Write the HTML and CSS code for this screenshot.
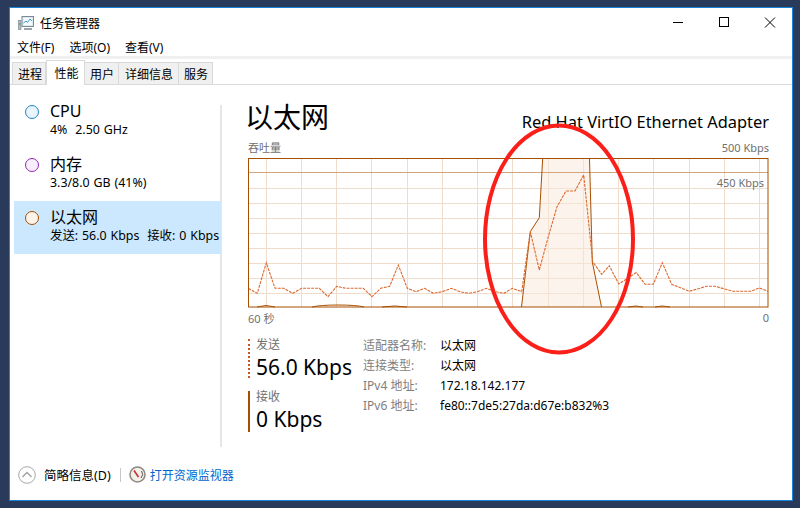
FILE: index.html
```html
<!DOCTYPE html>
<html lang="zh-CN">
<head>
    <meta charset="UTF-8">
    <title>任务管理器</title>
    <link rel="stylesheet" href="styles.css">
</head>
<body>
    <div class="window">
        <div class="titlebar">
            <svg class="app-icon" width="16" height="16" viewBox="0 0 16 16">
                <rect x="4" y="1.5" width="11.5" height="10" fill="#dfe9f2" stroke="#7d8a96"/>
                <rect x="5.5" y="3" width="8.5" height="7" fill="#f4fafe"/>
                <path d="M5.5 8 L8 6 L9.5 7.5 L12 4 L14 6" fill="none" stroke="#3f9cc9" stroke-width="1"/>
                <rect x="0.5" y="5.5" width="2.5" height="9" fill="#b5bcc2" stroke="#7d8a96" stroke-width="0.7"/>
                <rect x="1" y="8" width="1.5" height="2" fill="#5cb85c"/>
                <path d="M6 15 H14 V13 H6 Z" fill="#9aa3ab"/>
            </svg>
            <span class="title">任务管理器</span>
            <div class="controls">
                <svg width="12" height="12" viewBox="0 0 12 12"><path d="M1 5.5 H11" stroke="#000" fill="none"/></svg>
                <svg width="12" height="12" viewBox="0 0 12 12"><rect x="1.5" y="0.5" width="9" height="9" stroke="#000" fill="none"/></svg>
                <svg width="12" height="12" viewBox="0 0 12 12"><path d="M1 0.5 L11 10.5 M11 0.5 L1 10.5" stroke="#000" fill="none"/></svg>
            </div>
        </div>

        <div class="menu">
            <span>文件(F)</span>
            <span>选项(O)</span>
            <span>查看(V)</span>
        </div>

        <div class="tabs">
            <div class="tab">进程</div>
            <div class="tab active">性能</div>
            <div class="tab">用户</div>
            <div class="tab tab-wide">详细信息</div>
            <div class="tab">服务</div>
        </div>

        <div class="main">
            <div class="sidebar">
                <div class="side-item">
                    <span class="dot dot-cpu"></span>
                    <div>
                        <div class="side-title">CPU</div>
                        <div class="side-sub">4%&nbsp; 2.50 GHz</div>
                    </div>
                </div>
                <div class="side-item">
                    <span class="dot dot-mem"></span>
                    <div>
                        <div class="side-title">内存</div>
                        <div class="side-sub">3.3/8.0 GB (41%)</div>
                    </div>
                </div>
                <div class="side-item selected">
                    <span class="dot dot-net"></span>
                    <div>
                        <div class="side-title">以太网</div>
                        <div class="side-sub">发送: 56.0 Kbps&nbsp; 接收: 0 Kbps</div>
                    </div>
                </div>
            </div>

            <div class="content">
                <div class="head">
                    <div class="head-name">以太网</div>
                    <div class="head-adapter">Red Hat VirtIO Ethernet Adapter</div>
                </div>
                <div class="graph-label">
                    <span>吞吐量</span>
                    <span>500 Kbps</span>
                </div>
                <div class="graph">
                    <svg width="521" height="150" viewBox="248 158 521 150">
                        <path class="grid" d="M248 188.5H768M248 203.5H768M248 218.5H768M248 233.5H768M248 248.5H768M248 263.5H768M248 278.5H768M248 293.5H768
                            M266.5 158V307M301.5 158V307M336.5 158V307M371.5 158V307M407.5 158V307M442.5 158V307M477.5 158V307M512.5 158V307M548.5 158V307M583.5 158V307M618.5 158V307M653.5 158V307M689.5 158V307M724.5 158V307M759.5 158V307"/>
                        <polygon class="area" points="521.5,307 530.3,231.7 539.3,217.7 542.7,158 589.5,158 592.3,262 601.5,307"/>
                        <path class="limit" d="M248 172.5H768"/>
                        <polyline class="recv" points="521.5,307 530.3,231.7 539.3,217.7 542.7,158.5"/>
                        <polyline class="recv" points="589.5,158.5 592.3,262 601.5,307"/>
                        <path class="recv" d="M257 307Q266 304 275 307M312 307Q320 305 338 305T364 307M382 307Q395 305 407 307M628 307Q636 305 643 307M655 307Q662 305 670 307"/>
                        <polyline class="send" points="248.3,288.3 257.3,293.3 266.3,262.7 275,288.3 284,288.3 292.7,293.3 301.7,288.3 319.3,288.3 328,296.7 336.7,286.3 345.7,288.3 363.3,288.3 372,296.7 380.7,288.3 389.7,286.3 398.3,265 407.3,288.3 416,291.7 424.7,288.3 433.3,293.3 442.3,291.7 451.3,288.3 460,291.7 468.7,293.3 477.3,291.7 486.7,288.3 495.3,291.7 504,293.3 512.3,288.3 521.7,291.7 530.3,231.7 539.3,270 548.3,236.7 557,206.7 566,191 575,191 583.7,175 592.7,261.7 601.7,274.3 609.3,265.7 618.7,284 627.7,278.3 636.3,272.5 645,284.3 653.3,284.3 662.3,262.7 671.7,284.3 689.3,291.3 706.7,286.3 715,286.3 733.3,291.3 751,291.3 759.3,288 768,291.3"/>
                        <rect class="frame" x="248.5" y="158.5" width="519.5" height="148.5"/>
                    </svg>
                    <span class="limit-label">450 Kbps</span>
                </div>
                <div class="graph-axis">
                    <span>60 秒</span>
                    <span>0</span>
                </div>
                <div class="stats">
                    <div class="rates">
                        <div class="rate rate-send">
                            <div class="rate-name">发送</div>
                            <div class="rate-value">56.0 Kbps</div>
                        </div>
                        <div class="rate rate-recv">
                            <div class="rate-name">接收</div>
                            <div class="rate-value">0 Kbps</div>
                        </div>
                    </div>
                    <div class="props">
                        <span class="prop-name">适配器名称:</span><span>以太网</span>
                        <span class="prop-name">连接类型:</span><span>以太网</span>
                        <span class="prop-name">IPv4 地址:</span><span>172.18.142.177</span>
                        <span class="prop-name">IPv6 地址:</span><span>fe80::7de5:27da:d67e:b832%3</span>
                    </div>
                </div>
            </div>
        </div>

        <div class="footer">
            <svg width="18" height="18" viewBox="0 0 18 18">
                <circle cx="9" cy="9" r="8.3" fill="#fff" stroke="#a8a8a8"/>
                <path d="M4.5 11 L9 6.5 L13.5 11" fill="none" stroke="#a0a0a0" stroke-width="1.3"/>
            </svg>
            <span class="less">简略信息(D)</span>
            <span class="footer-sep"></span>
            <svg width="17" height="17" viewBox="0 0 17 17">
                <circle cx="8.5" cy="8.5" r="7.5" fill="#f3f0ea" stroke="#8e8a80" stroke-width="1.6"/>
                <path d="M5 4.5 L9.5 11" stroke="#c9302c" stroke-width="1.6" fill="none"/>
                <path d="M12.5 5 A5.5 5.5 0 0 1 12 12" stroke="#555" fill="none"/>
            </svg>
            <a class="monitor-link">打开资源监视器</a>
        </div>

        <svg class="circle-mark" width="156" height="236" viewBox="0 0 156 236">
            <ellipse cx="78" cy="118" rx="74" ry="113.5" fill="none" stroke="#fb1f1a" stroke-width="4"/>
        </svg>
    </div>
</body>
</html>
```

FILE: styles.css
```css
* {
    box-sizing: border-box;
}
body {
    margin: 0;
    height: 508px;
    overflow: hidden;
    background: #2a3a5a;
    font-family: "Noto Sans", "Noto Sans CJK SC", sans-serif;
    font-size: 12px;
    color: #000;
}
.window {
    position: relative;
    width: 784px;
    height: 494px;
    margin: 7px 0 0 9px;
    background: #fff;
    border: 1px solid #1883d7;
    display: flex;
    flex-direction: column;
}
.titlebar {
    height: 30px;
    padding-left: 8px;
    display: flex;
    align-items: center;
    gap: 6px;
    flex: none;
}
.title {
    font-size: 12px;
}
.controls {
    margin-left: auto;
    margin-right: 16px;
    display: flex;
    gap: 34px;
}
.menu {
    height: 18px;
    padding-left: 7px;
    display: flex;
    gap: 15px;
    align-items: center;
    flex: none;
}
.tabs {
    height: 29px;
    padding: 6px 0 0 2px;
    background: linear-gradient(#f0f0f0 3px, #fff 3px);
    border-bottom: 1px solid #d9d9d9;
    display: flex;
    align-items: flex-end;
    flex: none;
}
.tab {
    height: 22px;
    padding: 0 4px 0 5px;
    background: #f0f0f0;
    border: 1px solid #d9d9d9;
    border-left-width: 0;
    border-bottom: 0;
    display: flex;
    align-items: center;
    justify-content: center;
}
.tab:first-child {
    padding: 0 3px 0 5px;
    border-left-width: 1px;
}
.tab-wide {
    padding: 0 5px 0 6px;
}
.tab.active {
    height: 25px;
    margin-bottom: -1px;
    padding: 0 5.5px 0 7.5px;
    background: #fff;
    border-left-width: 1px;
}
.main {
    flex: 1;
    min-height: 0;
    display: flex;
}
.sidebar {
    width: 212px;
    height: 342px;
    margin-top: 20px;
    padding-left: 4px;
    border-right: 2px solid #e6e6e6;
    flex: none;
}
.side-item {
    height: 53px;
    padding: 6px 0 0 11px;
    display: flex;
    gap: 11px;
}
.side-item:first-child {
    margin-top: -10px;
}
.side-item.selected {
    background: #cce8ff;
    margin-right: -1px;
}
.dot {
    width: 14px;
    height: 14px;
    margin-top: 4px;
    border-radius: 50%;
    border: 1.5px solid;
    flex: none;
}
.dot-cpu {
    border-color: #1f84c0;
    background: #eaf4fb;
}
.dot-mem {
    border-color: #9528b4;
    background: #f6eefa;
}
.dot-net {
    border-color: #a74f01;
    background: #fcf3eb;
}
.side-title {
    font-size: 16px;
    line-height: 20px;
}
.side-sub {
    font-size: 12.4px;
    line-height: 17px;
    word-spacing: 0.7px;
    white-space: nowrap;
}
.content {
    flex: 1;
    padding: 11px 23px 0 26px;
}
.head {
    height: 42px;
    display: flex;
    justify-content: space-between;
    align-items: flex-start;
}
.head-name {
    margin-left: -3px;
    font-size: 28px;
    line-height: 42px;
}
.head-adapter {
    margin-top: 13px;
    font-size: 16.4px;
    line-height: 26px;
}
.graph-label, .graph-axis {
    height: 20px;
    padding-bottom: 2px;
    display: flex;
    justify-content: space-between;
    align-items: center;
    font-size: 11px;
    color: #707070;
}
.graph-axis {
    height: 19px;
    padding-bottom: 0;
}
.graph {
    position: relative;
    height: 150px;
}
.graph svg {
    display: block;
}
.grid {
    fill: none;
    stroke: #efdccb;
    stroke-width: 1;
}
.area {
    fill: #f9e9da;
    fill-opacity: 0.5;
}
.limit {
    fill: none;
    stroke: #d3a57c;
    stroke-width: 1.2;
}
.recv {
    fill: none;
    stroke: #a74f01;
    stroke-width: 1;
}
.send {
    fill: none;
    stroke: #dc6a30;
    stroke-width: 1.1;
    stroke-dasharray: 3 1;
}
.frame {
    fill: none;
    stroke: #a74f01;
    stroke-width: 1;
}
.limit-label {
    position: absolute;
    top: 17px;
    right: 5px;
    font-size: 11px;
    color: #707070;
}
.stats {
    margin-top: 8px;
    display: flex;
}
.rates {
    width: 115px;
    margin-top: 4px;
    flex: none;
}
.rate {
    height: 41px;
    padding-left: 6px;
    border-left: 2px solid #a74f01;
}
.rate-send {
    height: 39px;
    margin-bottom: 13px;
    border-left: 2px dotted #c9581f;
}
.rate-name {
    font-size: 12px;
    line-height: 12px;
    color: #707070;
}
.rate-value {
    margin-top: 3px;
    font-size: 21px;
    line-height: 26px;
    white-space: nowrap;
}
.props {
    display: grid;
    grid-template-columns: 77px auto;
    grid-auto-rows: 20px;
    justify-content: start;
    align-items: center;
    white-space: nowrap;
}
.prop-name {
    color: #808080;
}
.footer {
    height: 53px;
    padding: 2px 0 0 8px;
    display: flex;
    align-items: center;
    flex: none;
}
.less {
    margin-left: 8px;
    font-size: 12.5px;
}
.footer-sep {
    width: 1px;
    height: 14px;
    margin: 0 8px 0 9px;
    background: #c8c8c8;
}
.monitor-link {
    margin-left: 4px;
    color: #0066cc;
}
.circle-mark {
    position: absolute;
    left: 471px;
    top: 113px;
}
```
